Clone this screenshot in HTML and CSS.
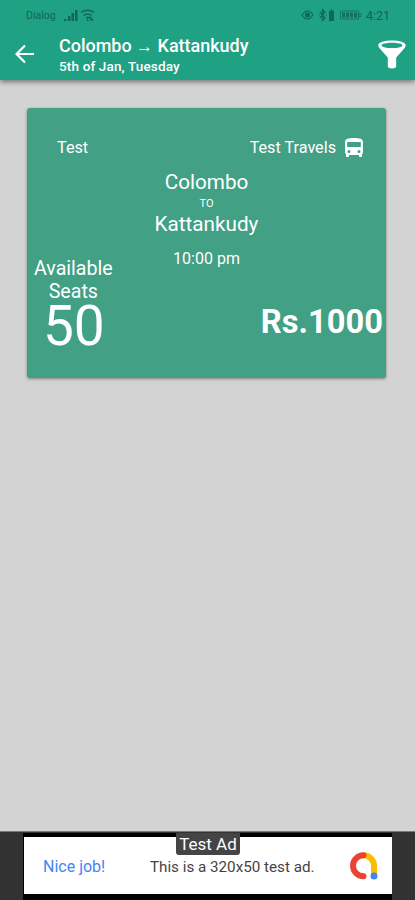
FILE: index.html
```html
<!DOCTYPE html>
<html lang="en">
<head>
	<meta charset="UTF-8">
	<title>Colombo → Kattankudy</title>
	<link rel="stylesheet" href="styles.css">
</head>
<body>
	<header>
		<div class="status">
			<span class="carrier">Dialog</span>
			<svg class="signal" width="32" height="14" viewBox="0 0 32 14">
				<path d="M0 11h2.500v2H0zM4 8h2.500v5H4zM7.500 5h2.500v8H7.500zM11 2h2.500v11H11z"/>
				<path d="M17 4.500q6.500-4.500 13 0M19.500 7.500q4-3 8 0M22 10q2-1.500 4 0" fill="none" stroke="#0f6755" stroke-width="1.500"/>
				<path d="M23 10l2 3-2 0zM26 8l4 4.500h-4z"/>
			</svg>
			<svg class="icons" width="62" height="14" viewBox="0 0 62 14">
				<path d="M1 7q5.500-8 11 0q-5.500 8-11 0z" fill="none" stroke="#0f6755" stroke-width="1.200"/>
				<circle cx="6.500" cy="7" r="2.500"/>
				<path d="M19 4l5 6-2.500 2.500v-11L24 4l-5 6M17.500 7h1M25 7h1" fill="none" stroke="#0f6755" stroke-width="1.200"/>
				<path d="M28 3h1.500V1.500h2V3H33v10h-5z"/>
				<path d="M39.500 3h18v8h-18zM58 5.500h2v3h-2z" fill="none" stroke="#0f6755" opacity=".7"/>
				<path d="M41 4.500h3v5h-3zM45 4.500h3v5h-3zM49 4.500h3v5h-3zM53 4.500h3v5h-3z" opacity=".8"/>
			</svg>
			<span class="clock">4:21</span>
		</div>
		<div class="bar">
			<svg class="back" width="20" height="20" viewBox="0 0 20 20">
				<path d="M19 10H2M10 1.500L1.500 10l8.500 8.500" fill="none" stroke="#fff" stroke-width="2.200"/>
			</svg>
			<div class="title">
				<h1>Colombo <span class="arrow">→</span> Kattankudy</h1>
				<p>5th of Jan, Tuesday</p>
			</div>
			<svg class="filter" width="28" height="29" viewBox="0 0 28 29">
				<path fill="#fff" fill-rule="evenodd" d="M14 .500C6.500.500.300 2.300.300 5.300c0 1.600 1 2.600 1.700 3.400l7.800 8.800v9c0 1.300 1.900 2 4.200 2s4.200-.7 4.200-2v-9L26 8.700c.7-.8 1.700-1.800 1.700-3.400C27.700 2.300 21.500.500 14 .500zM14 2.800c6 0 10.400 1.100 10.400 2.600S20 8 14 8 3.600 6.900 3.600 5.400 8 2.800 14 2.800z"/>
			</svg>
		</div>
	</header>

	<main>
		<div class="card">
			<div class="top">
				<span class="bus-name">Test</span>
				<span class="company">Test Travels</span>
				<svg class="bus" width="18" height="19" viewBox="0 0 18 19">
					<path fill="#fff" fill-rule="evenodd" d="M0 4C0 .800 3.500 0 9 0s9 .800 9 4v10c0 .900-.4 1.700-1 2.200V18c0 .600-.4 1-1 1h-1c-.6 0-1-.4-1-1v-1H4v1c0 .600-.4 1-1 1H2c-.6 0-1-.4-1-1v-1.800c-.6-.5-1-1.300-1-2.200zM2.200 4v5h13.600V4zM4 12a1.500 1.500 0 1 0 0 3 1.500 1.500 0 0 0 0-3zM14 12a1.500 1.500 0 1 0 0 3 1.500 1.500 0 0 0 0-3z"/>
				</svg>
			</div>
			<div class="route">
				<div class="city">Colombo</div>
				<div class="to">TO</div>
				<div class="city">Kattankudy</div>
				<div class="time">10:00 pm</div>
			</div>
			<div class="bottom">
				<div class="seats">
					<p>Available<br>Seats</p>
					<div class="count">50</div>
				</div>
				<div class="price">Rs.1000</div>
			</div>
		</div>
	</main>

	<footer>
		<div class="ad">
			<span class="tag">Test Ad</span>
			<span class="nice">Nice job!</span>
			<span class="desc">This is a 320x50 test ad.</span>
			<svg class="admob" width="30" height="30" viewBox="0 0 30 30">
				<g fill="none" stroke-width="6" stroke-linecap="round">
					<path d="M15.500 4.200A10.500 10.500 0 0 1 26 14.700V23" stroke="#fbbc04"/>
					<path d="M15.500 4.200a10.500 10.500 0 0 0 0 21" stroke="#ea4335"/>
				</g>
				<circle cx="26" cy="25" r="3.500" fill="#4285f4"/>
			</svg>
		</div>
	</footer>
</body>
</html>
```
FILE: styles.css
```css
*{box-sizing: border-box;}
body,h1,p{margin: 0; padding: 0;}
body{display: flex; flex-direction: column; height: 900px; background: #d3d3d3; font-family: Roboto, sans-serif; color: #fff; overflow: hidden;}
svg{display: block; flex: none;}
span,h1,.city,.to,.time,.price,.count{white-space: nowrap;}

header{height: 80px; background: #1fa184; box-shadow: 0 2px 5px rgba(0,0,0,.45);}
.status{display: flex; align-items: center; height: 29px; padding: 1px 25px 0 26px; color: #0f6755; fill: #0f6755;}
.carrier{font-size: 10.500px;}
.signal{margin-left: 8px;}
.icons{margin-left: auto;}
.clock{margin-left: 3px; font-size: 12.500px;}
.bar{display: flex; height: 51px; padding: 0 9px 0 15px;}
.back{margin-top: 15px;}
.title{margin: 7px auto 0 24px;}
h1{font-size: 18px; line-height: 20px; font-weight: 500; letter-spacing: -.02px;}
.arrow{font-size: 17px;}
.title p{font-size: 13.500px; line-height: 16px; margin-top: 2px; font-weight: 500; letter-spacing: .15px;}
.filter{margin-top: 11px;}

main{flex: 1; padding: 28px 29px 0 27px;}
.card{height: 270px; background: #42a084; border-radius: 3px; box-shadow: 0 1px 3px rgba(0,0,0,.4);}
.top{display: flex; align-items: center; height: 60px; padding: 18px 23px 0 30px; font-size: 16.200px;}
.company{margin-left: auto;}
.bus{margin-left: 9px;}
.route{text-align: center;}
.city{font-size: 20.700px; line-height: 24px;}
.route .city:first-child{padding-top: 2px;}
.to{font-size: 11px; line-height: 17px; padding-top: 1px;}
.time{margin-top: 13px; font-size: 16px; line-height: 20px;}
.bottom{display: flex; justify-content: space-between; padding: 0 3px 0 7px;}
.seats{text-align: center; margin-top: -12px;}
.seats p{font-size: 19.600px; line-height: 23px;}
.count{font-size: 55px; line-height: 46px; margin-left: 1px;}
.price{margin-top: 33px; font-size: 32.700px; line-height: 40px; font-weight: 700;}

footer{height: 69px; padding: 1px 23px 0; background: #323232; border-top: 1px solid #777;}
.ad{position: relative; display: flex; align-items: center; height: 67px; padding: 0 14px 0 19px; background: #fff; border: solid #000; border-width: 4px 0 6px 1px;}
.tag{position: absolute; left: 152px; top: -4px; width: 64px; height: 22px; border-radius: 0 0 3px 3px; background: #444; font-size: 17px; line-height: 22px; text-align: center;}
.nice{width: 107px; font-size: 16px; color: #4285f4; padding-top: 2px;}
.desc{font-size: 15.200px; color: #444; padding-top: 2px;}
.admob{margin-left: auto;}
```
